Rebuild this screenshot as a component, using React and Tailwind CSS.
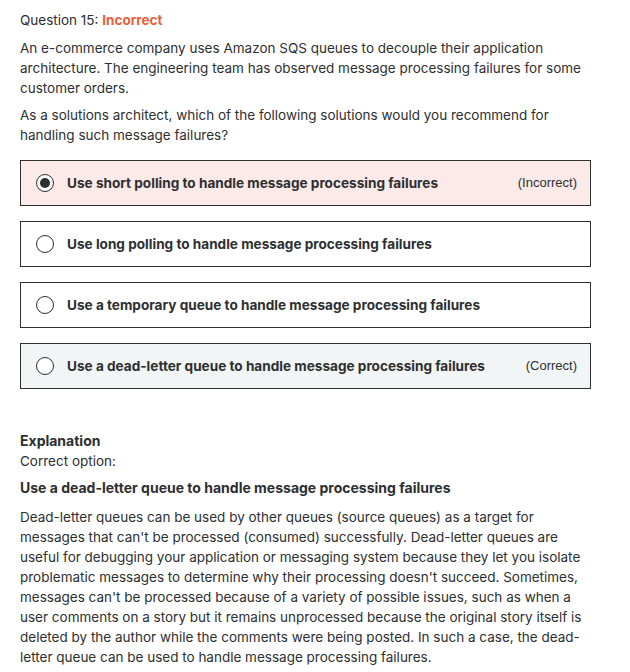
function Radio({ checked }) {
  return (
    <span className="flex h-[18px] w-[18px] shrink-0 items-center justify-center rounded-full border-[1.5px] border-[#2d2f31] bg-white">
      {checked && <span className="h-[10px] w-[10px] rounded-full bg-[#2d2f31]" />}
    </span>
  );
}

const options = [
  { text: "Use short polling to handle message processing failures", state: "incorrect" },
  { text: "Use long polling to handle message processing failures" },
  { text: "Use a temporary queue to handle message processing failures" },
  { text: "Use a dead-letter queue to handle message processing failures", state: "correct" },
];

function Option({ text, state }) {
  const bg =
    state === "incorrect" ? "bg-[#fbeae7]" : state === "correct" ? "bg-[#f2f5f5]" : "bg-white";
  return (
    <div className={`flex h-[46px] items-center border border-[#2d2f31] pl-[15px] pr-[13px] ${bg}`}>
      <Radio checked={state === "incorrect"} />
      <span className="ml-[13px] flex-1 text-[13.6px] font-bold text-[#2d2f31]">{text}</span>
      {state === "incorrect" && (
        <span className="font-['Liberation_Sans',sans-serif] text-[13px] text-[#2d2f31]">(Incorrect)</span>
      )}
      {state === "correct" && (
        <span className="font-['Liberation_Sans',sans-serif] text-[13px] text-[#2d2f31]">(Correct)</span>
      )}
    </div>
  );
}

export default function App() {
  return (
    <div className="w-[630px] bg-white px-[20px] pt-[10px] font-['Inter',sans-serif] text-[13.5px] leading-[20px] text-[#2d2f31]">
      <div>
        Question 15: <span className="font-bold text-[#e8603c]">Incorrect</span>
      </div>
      <p className="mt-[8px] w-[570px]">
        An e-commerce company uses Amazon SQS queues to decouple their application architecture. The
        engineering team has observed message processing failures for some customer orders.
      </p>
      <p className="mt-[7px] w-[570px]">
        As a solutions architect, which of the following solutions would you recommend for handling
        such message failures?
      </p>
      <div className="mt-[15px] flex w-[571px] flex-col gap-[15px]">
        {options.map((o) => (
          <Option key={o.text} {...o} />
        ))}
      </div>
      <div className="mt-[42px] text-[14px] font-bold">Explanation</div>
      <div>Correct option:</div>
      <div className="mt-[7px] text-[14px] font-bold">
        Use a dead-letter queue to handle message processing failures
      </div>
      <p className="mt-[9px] w-[575px]">
        Dead-letter queues can be used by other queues (source queues) as a target for messages that
        can't be processed (consumed) successfully. Dead-letter queues are useful for debugging your
        application or messaging system because they let you isolate problematic messages to
        determine why their processing doesn't succeed. Sometimes, messages can't be processed
        because of a variety of possible issues, such as when a user comments on a story but it
        remains unprocessed because the original story itself is deleted by the author while the
        comments were being posted. In such a case, the dead-letter queue can be used to handle
        message processing failures.
      </p>
    </div>
  );
}
